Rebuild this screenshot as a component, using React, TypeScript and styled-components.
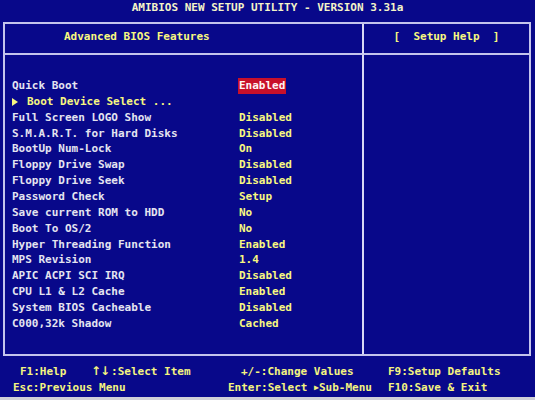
import React from 'react';
import styled, { createGlobalStyle } from 'styled-components';

const GlobalStyle = createGlobalStyle`
  html, body {
    margin: 0;
    padding: 0;
    background: #08088a;
  }
  body {
    font-family: "DejaVu Sans Mono", "Liberation Mono", monospace;
    font-weight: bold;
    font-size: 11px;
  }
`;

const Screen = styled.div`
  width: 535px;
  height: 400px;
  display: flex;
  flex-direction: column;
  background: #08088a;
  overflow: hidden;
`;

const TitleBar = styled.div`
  box-sizing: border-box;
  height: 22px;
  padding-top: 1px;
  line-height: 14px;
  text-align: center;
  color: #f4f4c8;
  white-space: pre;
`;

const Frame = styled.div`
  box-sizing: border-box;
  margin: 0 4px 0 3px;
  height: 334px;
  border: 2px solid #c4c4ec;
  display: grid;
  grid-template-columns: 359px 1fr;
  grid-template-rows: 31px 1fr;
`;

const HeaderCell = styled.div<{ $left?: boolean; $center?: boolean }>`
  box-sizing: border-box;
  border-bottom: 2px solid #c4c4ec;
  border-right: ${p => (p.$left ? '2px solid #d8d8f4' : 'none')};
  line-height: 26px;
  color: #f8f880;
  white-space: pre;
  padding-left: ${p => (p.$center ? '0' : '59px')};
  text-align: ${p => (p.$center ? 'center' : 'left')};
`;

const MainPane = styled.div`
  box-sizing: border-box;
  border-right: 2px solid #d8d8f4;
  padding: 23px 0 0 7px;
`;

const HelpPane = styled.div``;

const SettingRow = styled.div`
  display: grid;
  grid-template-columns: 227px 1fr;
  line-height: 15.87px;
  height: 15.87px;
  white-space: pre;
`;

const Label = styled.span<{ $sub?: boolean }>`
  color: ${p => (p.$sub ? '#f8f880' : '#e4e4f0')};
  display: flex;
  align-items: center;
`;

const Arrow = styled.span`
  display: inline-block;
  width: 0;
  height: 0;
  border-top: 4px solid transparent;
  border-bottom: 4px solid transparent;
  border-left: 6px solid #f8f880;
  margin-right: 9px;
`;

const Value = styled.span<{ $active?: boolean }>`
  color: ${p => (p.$active ? '#fff4f4' : '#f8f880')};
  background: ${p => (p.$active ? '#c8102a' : 'transparent')};
  justify-self: start;
  padding: 0 1px;
  margin-left: -1px;
`;

const Footer = styled.div`
  height: 41px;
  box-sizing: border-box;
  padding: 8px 0 0 13px;
  display: grid;
  grid-template-columns: 78px 137px 160px 1fr;
  grid-auto-rows: 15.5px;
  line-height: 15.5px;
  color: #f4f480;
  white-space: pre;
`;

const Key = styled.span<{ $indent?: number; $span?: number }>`
  padding-left: ${p => p.$indent ?? 0}px;
  grid-column: ${p => (p.$span ? `span ${p.$span}` : 'auto')};
`;

const Arrows = styled.span`
  font-family: "DejaVu Sans", sans-serif;
  font-size: 12px;
  letter-spacing: -1px;
  margin-right: 2px;
`;

const Tri = styled.span`
  font-size: 8px;
  vertical-align: 1px;
`;

const BottomBar = styled.div`
  height: 3px;
  background: #d0d0d8;
`;

const settings: { label: string; value?: string; sub?: boolean; active?: boolean }[] = [
  { label: 'Quick Boot', value: 'Enabled', active: true },
  { label: 'Boot Device Select ...', sub: true },
  { label: 'Full Screen LOGO Show', value: 'Disabled' },
  { label: 'S.M.A.R.T. for Hard Disks', value: 'Disabled' },
  { label: 'BootUp Num-Lock', value: 'On' },
  { label: 'Floppy Drive Swap', value: 'Disabled' },
  { label: 'Floppy Drive Seek', value: 'Disabled' },
  { label: 'Password Check', value: 'Setup' },
  { label: 'Save current ROM to HDD', value: 'No' },
  { label: 'Boot To OS/2', value: 'No' },
  { label: 'Hyper Threading Function', value: 'Enabled' },
  { label: 'MPS Revision', value: '1.4' },
  { label: 'APIC ACPI SCI IRQ', value: 'Disabled' },
  { label: 'CPU L1 & L2 Cache', value: 'Enabled' },
  { label: 'System BIOS Cacheable', value: 'Disabled' },
  { label: 'C000,32k Shadow', value: 'Cached' },
];

export default function App() {
  return (
    <Screen>
      <GlobalStyle />
      <TitleBar>AMIBIOS NEW SETUP UTILITY - VERSION 3.31a</TitleBar>
      <Frame>
        <HeaderCell $left>Advanced BIOS Features</HeaderCell>
        <HeaderCell $center>{'[  Setup Help  ]'}</HeaderCell>
        <MainPane>
          {settings.map(s => (
            <SettingRow key={s.label}>
              <Label $sub={s.sub}>
                {s.sub && <Arrow />}
                {s.label}
              </Label>
              {s.value && <Value $active={s.active}>{s.value}</Value>}
            </SettingRow>
          ))}
        </MainPane>
        <HelpPane />
      </Frame>
      <Footer>
        <Key $indent={7}>F1:Help</Key>
        <Key>
          <Arrows>↑↓</Arrows>:Select Item
        </Key>
        <Key $indent={13}>+/-:Change Values</Key>
        <Key>F9:Setup Defaults</Key>
        <Key $span={2}>Esc:Previous Menu</Key>
        <Key>
          Enter:Select <Tri>▶</Tri>Sub-Menu
        </Key>
        <Key>F10:Save &amp; Exit</Key>
      </Footer>
      <BottomBar />
    </Screen>
  );
}
